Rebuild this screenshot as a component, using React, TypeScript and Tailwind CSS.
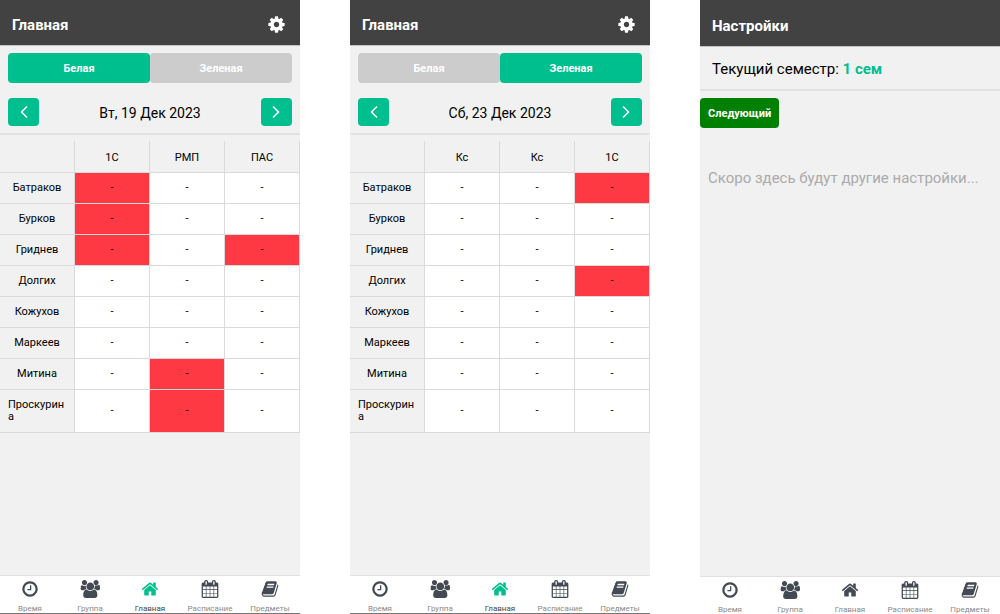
import { useState } from "react";
import { ChevronLeft, ChevronRight } from "lucide-react";

type Day = {
  week: "white" | "green";
  date: string;
  subjects: string[];
  absent: Record<string, number[]>;
};

const students = ["Батраков", "Бурков", "Гриднев", "Долгих", "Кожухов", "Маркеев", "Митина", "Проскурина"];

const tuesday: Day = {
  week: "white",
  date: "Вт, 19 Дек 2023",
  subjects: ["1С", "РМП", "ПАС"],
  absent: { Батраков: [0], Бурков: [0], Гриднев: [0, 2], Митина: [1], Проскурина: [1] },
};

const saturday: Day = {
  week: "green",
  date: "Сб, 23 Дек 2023",
  subjects: ["Кс", "Кс", "1С"],
  absent: { Батраков: [2], Долгих: [2] },
};

const cog =
  "M1152 896q0-106-75-181t-181-75-181 75-75 181 75 181 181 75 181-75 75-181zm512-109v222q0 12-8 23t-20 13l-185 28q-19 54-39 91 35 50 107 138 10 12 10 25t-9 23q-27 37-99 108t-94 71q-12 0-26-9l-138-108q-44 23-91 38-16 136-29 186-7 28-36 28h-222q-14 0-24.5-8.5t-11.5-21.5l-28-184q-49-16-90-37l-141 107q-10 9-25 9-14 0-25-11-126-114-165-168-7-10-7-23 0-12 8-23 15-21 51-66.5t54-70.5q-27-50-41-99l-183-27q-13-2-21-12.5t-8-23.5v-222q0-12 8-23t19-13l186-28q14-46 39-92-40-57-107-138-10-12-10-24 0-10 9-23 26-36 98.5-107.5t94.5-71.5q13 0 26 10l138 107q44-23 91-38 16-136 29-186 7-28 36-28h222q14 0 24.5 8.5t11.5 21.5l28 184q49 16 90 37l142-107q9-9 24-9 13 0 25 10 129 119 165 170 7 8 7 22 0 12-8 23-15 21-51 66.5t-54 70.5q26 50 41 98l183 28q13 2 21 12.5t8 23.5z";

const tabs = [
  {
    label: "Время",
    box: "0 0 1792 1792",
    d: "M1024 544v448q0 14-9 23t-23 9h-320q-14 0-23-9t-9-23v-64q0-14 9-23t23-9h224v-352q0-14 9-23t23-9h64q14 0 23 9t9 23zm416 352q0-148-73-273t-198-198-273-73-273 73-198 198-73 273 73 273 198 198 273 73 273-73 198-198 73-273zm224 0q0 209-103 385.5t-279.5 279.5-385.5 103-385.5-103-279.5-279.5-103-385.5 103-385.5 279.5-279.5 385.5-103 385.5 103 279.5 279.5 103 385.5z",
  },
  {
    label: "Группа",
    box: "0 0 2048 1792",
    d: "M657 896q-162 5-265 128h-134q-82 0-138-40.5t-56-118.5q0-353 124-353 6 0 43.5 21t97.5 42.5 119 21.5q67 0 133-23-5 37-5 66 0 159 93 294zm1071 637q0 120-73 189.5t-194 69.5h-874q-121 0-194-69.5t-73-189.5q0-53 3.5-103.5t14-109 26.5-108.5 43-97.5 62-81 85.5-53.5 111.5-20q10 0 43 21.5t73 48 107 48 135 21.5 135-21.5 107-48 73-48 43-21.5q61 0 111.5 20t85.5 53.5 62 81 43 97.5 26.5 108.5 14 109 3.5 103.5zm-1024-1277q0 106-75 181t-181 75-181-75-75-181 75-181 181-75 181 75 75 181zm704 384q0 159-112.5 271.5t-271.5 112.5-271.5-112.5-112.5-271.5 112.5-271.5 271.5-112.5 271.5 112.5 112.5 271.5zm576 225q0 78-56 118.5t-138 40.5h-134q-103-123-265-128 93-135 93-294 0-29-5-66 66 23 133 23 59 0 119-21.5t97.5-42.5 43.5-21q124 0 124 353zm-128-609q0 106-75 181t-181 75-181-75-75-181 75-181 181-75 181 75 75 181z",
  },
  {
    label: "Главная",
    box: "0 0 1792 1792",
    d: "M1472 992v480q0 26-19 45t-45 19h-384v-384h-256v384h-384q-26 0-45-19t-19-45v-480q0-1 .5-3t.5-3l575-474 575 474q1 2 1 6zm223-69l-62 74q-8 9-21 11h-3q-13 0-21-7l-692-577-692 577q-12 8-24 7-13-2-21-11l-62-74q-8-10-7-23.5t11-21.5l719-599q32-26 76-26t76 26l244 204v-195q0-14 9-23t23-9h192q14 0 23 9t9 23v408l219 182q10 8 11 21.5t-7 23.5z",
  },
  {
    label: "Расписание",
    box: "0 0 1792 1792",
    d: "M192 1664h288v-288h-288v288zm352 0h320v-288h-320v288zm-352-352h288v-320h-288v320zm352 0h320v-320h-320v320zm-352-384h288v-288h-288v288zm736 736h320v-288h-320v288zm-384-736h320v-288h-320v288zm768 736h288v-288h-288v288zm-384-352h320v-320h-320v320zm-352-864v-288q0-13-9.5-22.5t-22.5-9.5h-64q-13 0-22.5 9.5t-9.5 22.5v288q0 13 9.5 22.5t22.5 9.5h64q13 0 22.5-9.5t9.5-22.5zm736 864h288v-320h-288v320zm-384-384h320v-288h-320v288zm384 0h288v-288h-288v288zm32-480v-288q0-13-9.5-22.5t-22.5-9.5h-64q-13 0-22.5 9.5t-9.5 22.5v288q0 13 9.5 22.5t22.5 9.5h64q13 0 22.5-9.5t9.5-22.5zm384-64v1280q0 52-38 90t-90 38h-1408q-52 0-90-38t-38-90v-1280q0-52 38-90t90-38h128v-96q0-66 47-113t113-47h64q66 0 113 47t47 113v96h384v-96q0-66 47-113t113-47h64q66 0 113 47t47 113v96h128q52 0 90 38t38 90z",
  },
  {
    label: "Предметы",
    box: "0 0 1792 1792",
    d: "M1703 478q40 57 18 129l-275 906q-19 64-76.5 107.5t-122.5 43.5h-923q-77 0-148.5-53.5t-99.5-131.5q-24-67-2-127 0-4 3-27t4-37q1-8-3-21.5t-3-19.5q2-11 8-21t16.5-23.5 16.5-23.5q23-38 45-91.5t30-91.5q3-10 .5-30t-.5-28q3-11 17-28t17-23q21-36 42-92t25-90q1-9-2.5-32t.5-28q4-13 22-30.5t22-22.5q19-26 42.5-84.5t27.5-96.5q1-8-3-25.5t-2-26.5q2-8 9-18t18-23 17-21q8-12 16.5-30.5t15-35 16-36 19.5-32 26.5-23.5 36-11.5 47.5 5.5l-1 3q38-9 51-9h761q74 0 114 56t18 130l-274 906q-36 119-71.5 153.5t-128.5 34.5h-869q-27 0-38 15-11 16-1 43 24 70 144 70h923q29 0 56-15.5t35-41.5l300-987q7-22 5-57 38 15 59 43zm-1064 2q-4 13 2 22.5t20 9.5h608q13 0 25.5-9.5t16.5-22.5l21-64q4-13-2-22.5t-20-9.5h-608q-13 0-25.5 9.5t-16.5 22.5zm-83 256q-4 13 2 22.5t20 9.5h608q13 0 25.5-9.5t16.5-22.5l21-64q4-13-2-22.5t-20-9.5h-608q-13 0-25.5 9.5t-16.5 22.5z",
  },
];

function TabBar({ active, edge }: { active?: string; edge: boolean }) {
  return (
    <nav className={`grid grid-cols-5 border-t border-t-[#e0e0e0] bg-white ${edge ? "h-[39px] border-b border-b-[#777777]" : "h-[38px]"}`}>
      {tabs.map((tab) => (
        <a
          key={tab.label}
          href="#"
          className={`flex flex-col items-center gap-[5px] overflow-hidden pt-1 text-[8px] leading-3 ${active === tab.label ? "text-[#444444]" : "text-[#8a8a8a]"}`}
        >
          <svg
            viewBox={tab.box}
            aria-hidden="true"
            className={`h-[18px] shrink-0 ${active === tab.label ? "fill-[#00bf8f]" : "fill-[#444a54]"}`}
          >
            <path d={tab.d} />
          </svg>
          {tab.label}
        </a>
      ))}
    </nav>
  );
}

function HomeScreen({ day }: { day: Day }) {
  const [week, setWeek] = useState(day.week);
  const weekButton = "h-[30px] rounded-[4px] pt-0.5 text-[11px] font-bold text-white";
  const arrow = "flex h-7 w-[31px] items-center justify-center rounded-[4px] bg-[#00bf8f] text-white";
  return (
    <section className="flex min-h-screen flex-col bg-[#f1f1f1]">
      <header className="flex h-[46px] items-center justify-between border-b border-[#c4c4c4] bg-[#424242] px-3 pt-1 text-white">
        <h1 className="pt-0.5 text-[15px] font-bold">Главная</h1>
        <button aria-label="Настройки" className="px-0.5">
          <svg viewBox="0 0 1792 1792" aria-hidden="true" className="size-[19px] fill-white">
            <path d={cog} />
          </svg>
        </button>
      </header>
      <div className="border-b-2 border-[#e2e2e2] px-2 pt-[7px] pb-[7px]">
        <div className="grid grid-cols-2">
          <button onClick={() => setWeek("white")} className={`${weekButton} ${week === "white" ? "bg-[#00bf8f]" : "bg-[#cccccc]"}`}>
            Белая
          </button>
          <button onClick={() => setWeek("green")} className={`${weekButton} ${week === "green" ? "bg-[#00bf8f]" : "bg-[#cccccc]"}`}>
            Зеленая
          </button>
        </div>
        <div className="mt-[15px] flex items-center justify-between">
          <button aria-label="Предыдущий день" className={arrow}>
            <ChevronLeft className="size-5" />
          </button>
          <p className="pt-0.5 text-[14px] leading-[26px]">{day.date}</p>
          <button aria-label="Следующий день" className={arrow}>
            <ChevronRight className="size-5" />
          </button>
        </div>
      </div>
      <table className="mt-1.5 w-full table-fixed border-separate border-spacing-0 text-[11px] leading-3">
        <thead>
          <tr className="h-8">
            <th aria-label="Студент" className="border-r border-b border-[#dadada]" />
            {day.subjects.map((subject, i) => (
              <th key={i} className="border-r border-b border-[#dadada] p-0 pt-0.5 font-normal">
                {subject}
              </th>
            ))}
          </tr>
        </thead>
        <tbody>
          {students.map((name) => (
            <tr key={name}>
              <th className="border-r border-b border-[#dadada] px-2 py-[9px] font-normal">
                <span className="inline-block max-w-full text-left align-top wrap-anywhere">{name}</span>
              </th>
              {day.subjects.map((_, i) => (
                <td
                  key={i}
                  className={`border-r border-b border-[#dadada] p-0 text-center ${day.absent[name]?.includes(i) ? "bg-[#ff3944]" : "bg-white"}`}
                >
                  -
                </td>
              ))}
            </tr>
          ))}
        </tbody>
      </table>
      <div className="flex-1" />
      <TabBar active="Главная" edge />
    </section>
  );
}

function SettingsScreen() {
  return (
    <section className="flex min-h-screen flex-col bg-[#f1f1f1]">
      <header className="flex h-[47px] items-center border-b border-[#c4c4c4] bg-[#424242] px-3 pt-1 text-white">
        <h1 className="pt-0.5 text-[15px] font-bold">Настройки</h1>
      </header>
      <p className="border-b-2 border-[#e2e2e2] px-3 pt-3 pb-[9px] text-[15px] leading-[21px]">
        Текущий семестр: <strong className="font-bold text-[#00bf8f]">1 сем</strong>
      </p>
      <button className="mt-[7px] h-[30px] self-start rounded-[4px] bg-[#008000] px-2 pt-0.5 text-[11px] font-bold text-white">Следующий</button>
      <p className="mt-10 px-2 text-[15px] leading-5 text-[#aaaaaa]">Скоро здесь будут другие настройки...</p>
      <div className="flex-1" />
      <TabBar edge={false} />
    </section>
  );
}

export default function App() {
  return (
    <main className="grid min-h-screen grid-cols-3 gap-[50px] bg-white font-[Roboto,'Noto_Sans',sans-serif] text-black">
      <HomeScreen day={tuesday} />
      <HomeScreen day={saturday} />
      <SettingsScreen />
    </main>
  );
}
